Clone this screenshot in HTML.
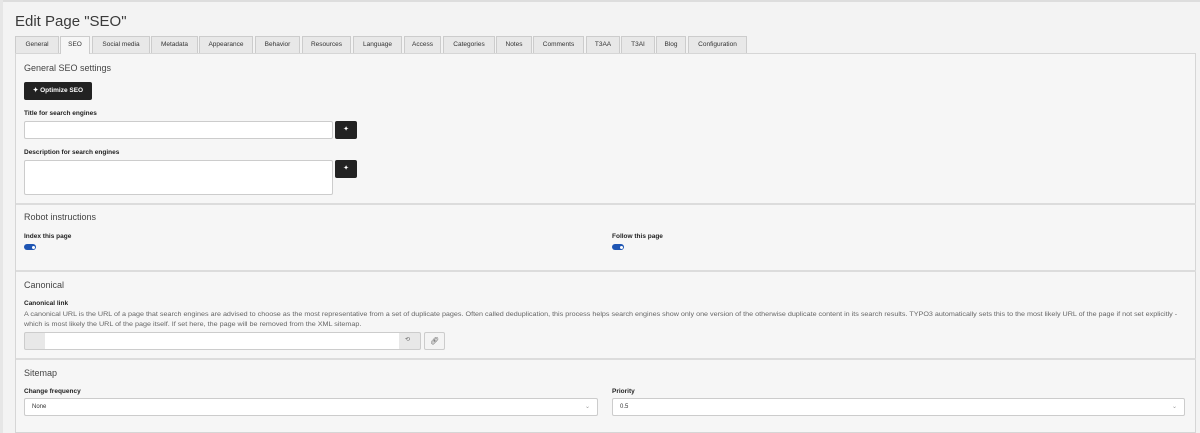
<!DOCTYPE html>
<html><head><style>
*{box-sizing:border-box;margin:0;padding:0}
body{width:1200px;height:433px;background:#f3f3f3;font-family:"Liberation Sans",sans-serif;color:#333;position:relative;overflow:hidden}
.a{position:absolute}
.top{left:0;top:0;width:1200px;height:2px;background:#ddd}
.left{left:0;top:0;width:3px;height:433px;background:#e6e6e6}
h1{position:absolute;left:15px;top:13px;font-size:15px;font-weight:normal;color:#3a3a3a}
.tab{position:absolute;top:36px;height:17px;border:1px solid #ccc;border-bottom:none;background:#e8e8e8;font-size:6.5px;color:#333;text-align:center;line-height:16px}
.tab.act{background:#f6f6f6;height:18px}
.panel{left:15px;top:53px;width:1181px;height:380px;background:#f6f6f6;border:1px solid #d6d6d6}
.hr{left:16px;width:1180px;height:2px;background:#dcdcdc}
.h2{font-size:9px;color:#444}
.lbl{font-size:6.5px;font-weight:bold;color:#222}
.inp{background:#fff;border:1px solid #ccc;border-radius:2px}
.btn{background:#222;border-radius:2px;color:#fff}
.tog{width:12px;height:6px;border-radius:3px;background:#1e55b3}
.tog:after{content:"";position:absolute;right:1.5px;top:1.5px;width:3px;height:3px;border-radius:50%;background:#fff}
.small{font-size:6.4px;color:#666;line-height:10px;white-space:nowrap;transform:scaleX(1.123);transform-origin:0 0}
</style></head><body>
<div class="a top"></div><div class="a left"></div>
<h1>Edit Page "SEO"</h1>
<div class="a panel"></div>
<div class="tab" style="left:15px;width:44px">General</div>
<div class="tab act" style="left:60px;width:30px">SEO</div>
<div class="tab" style="left:92px;width:58px">Social media</div>
<div class="tab" style="left:151px;width:47px">Metadata</div>
<div class="tab" style="left:199px;width:54px">Appearance</div>
<div class="tab" style="left:255px;width:45px">Behavior</div>
<div class="tab" style="left:302px;width:49px">Resources</div>
<div class="tab" style="left:353px;width:49px">Language</div>
<div class="tab" style="left:404px;width:37px">Access</div>
<div class="tab" style="left:443px;width:52px">Categories</div>
<div class="tab" style="left:496px;width:36px">Notes</div>
<div class="tab" style="left:533px;width:51px">Comments</div>
<div class="tab" style="left:586px;width:34px">T3AA</div>
<div class="tab" style="left:621px;width:34px">T3AI</div>
<div class="tab" style="left:656px;width:30px">Blog</div>
<div class="tab" style="left:688px;width:59px">Configuration</div>

<div class="a h2" style="left:24px;top:63px">General SEO settings</div>
<div class="a btn" style="left:24px;top:82px;width:68px;height:18px;font-size:6.5px;font-weight:bold;line-height:18px;text-align:center">✦ Optimize SEO</div>
<div class="a lbl" style="left:24px;top:110px">Title for search engines</div>
<div class="a inp" style="left:24px;top:121px;width:309px;height:18px"></div>
<div class="a btn" style="left:335px;top:121px;width:22px;height:18px;font-size:7px;text-align:center;line-height:18px">✦</div>
<div class="a lbl" style="left:24px;top:149px">Description for search engines</div>
<div class="a inp" style="left:24px;top:160px;width:309px;height:35px"></div>
<div class="a btn" style="left:335px;top:160px;width:22px;height:18px;font-size:7px;text-align:center;line-height:18px">✦</div>

<div class="a hr" style="top:203px"></div>
<div class="a h2" style="left:24px;top:212px">Robot instructions</div>
<div class="a lbl" style="left:24px;top:233px">Index this page</div>
<div class="a tog" style="left:24px;top:244px"></div>
<div class="a lbl" style="left:612px;top:233px">Follow this page</div>
<div class="a tog" style="left:612px;top:244px"></div>

<div class="a hr" style="top:270px"></div>
<div class="a h2" style="left:24px;top:280px">Canonical</div>
<div class="a lbl" style="left:24px;top:300px">Canonical link</div>
<div class="a small" style="left:24px;top:310px">A canonical URL is the URL of a page that search engines are advised to choose as the most representative from a set of duplicate pages. Often called deduplication, this process helps search engines show only one version of the otherwise duplicate content in its search results. TYPO3 automatically sets this to the most likely URL of the page if not set explicitly -<br>which is most likely the URL of the page itself. If set here, the page will be removed from the XML sitemap.</div>
<div class="a inp" style="left:24px;top:332px;width:397px;height:18px;background:#e8e8e8"></div>
<div class="a" style="left:45px;top:333px;width:354px;height:16px;background:#fff"></div>
<div class="a" style="left:405px;top:336px;font-size:6px;color:#666">⟲</div>
<div class="a inp" style="left:424px;top:332px;width:21px;height:18px;background:#f4f4f4;font-size:7px;text-align:center;line-height:17px;color:#555">🔗︎</div>

<div class="a hr" style="top:358px"></div>
<div class="a h2" style="left:24px;top:368px">Sitemap</div>
<div class="a lbl" style="left:24px;top:388px">Change frequency</div>
<div class="a inp" style="left:24px;top:398px;width:574px;height:18px;font-size:6px;line-height:17px;padding-left:7px">None<span style="position:absolute;right:7px;color:#999">⌄</span></div>
<div class="a lbl" style="left:612px;top:388px">Priority</div>
<div class="a inp" style="left:612px;top:398px;width:573px;height:18px;font-size:6px;line-height:17px;padding-left:7px">0.5<span style="position:absolute;right:7px;color:#999">⌄</span></div>
</body></html>
